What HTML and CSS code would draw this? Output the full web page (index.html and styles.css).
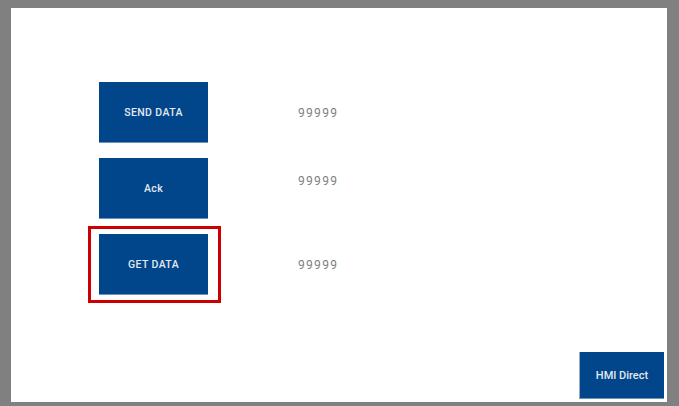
FILE: index.html
```html
<!DOCTYPE html>
<html>

<head>
    <meta charset="UTF-8">
    <title>HMI Screen</title>
    <!-- Styling for the HMI panel -->
    <link rel="stylesheet" href="styles.css">
</head>

<body>
    <div class="screen">
        <div class="rows">
            <div class="row">
                <button type="button" class="btn">SEND DATA</button>
                <span class="value">99999</span>
            </div>
            <div class="row">
                <button type="button" class="btn">Ack</button>
                <span class="value raised">99999</span>
            </div>
            <div class="row">
                <!-- red frame marks the selected button -->
                <button type="button" class="btn selected">GET DATA</button>
                <span class="value">99999</span>
            </div>
        </div>
        <button type="button" class="btn direct">HMI Direct</button>
    </div>
</body>

</html>
```

FILE: styles.css
```css
body {
    background-color: #808080;
    box-sizing: border-box;
    height: 406px;
    margin: 0;
    overflow: hidden;
    padding: 8px 12px 4px 11px;
}

.screen {
    background-color: #FFFFFF;
    display: flex;
    flex-direction: column;
    height: 100%;
}

.rows {
    display: flex;
    flex-direction: column;
    gap: 15px;
    padding: 74px 0 0 88px;
}

.row {
    align-items: center;
    display: flex;
}

.btn {
    background-color: #01468a;
    border: none;
    border-bottom: 1px solid #6d93bd;
    color: #E4E9F0;
    font-family: Roboto, "Liberation Sans", sans-serif;
    font-size: 10.5px;
    font-weight: 500;
    height: 61px;
    letter-spacing: 0.4px;
    padding: 0;
    position: relative;
    width: 109px;
}

.selected::after {
    border: 3px solid #CC0000;
    bottom: -9px;
    content: "";
    left: -11px;
    position: absolute;
    right: -13px;
    top: -8px;
}

.value {
    color: #7f7f7f;
    font-family: Roboto, "Liberation Sans", sans-serif;
    font-size: 12px;
    letter-spacing: 1.3px;
    line-height: 14px;
    margin-left: 90px;
}

.raised {
    align-self: flex-start;
    margin-top: 16px;
}

.direct {
    align-self: flex-end;
    border-left: 1px solid #9aa8b8;
    font-size: 11px;
    height: 47px;
    letter-spacing: 0;
    margin: auto 3px 3px 0;
    width: 85px;
}
```
